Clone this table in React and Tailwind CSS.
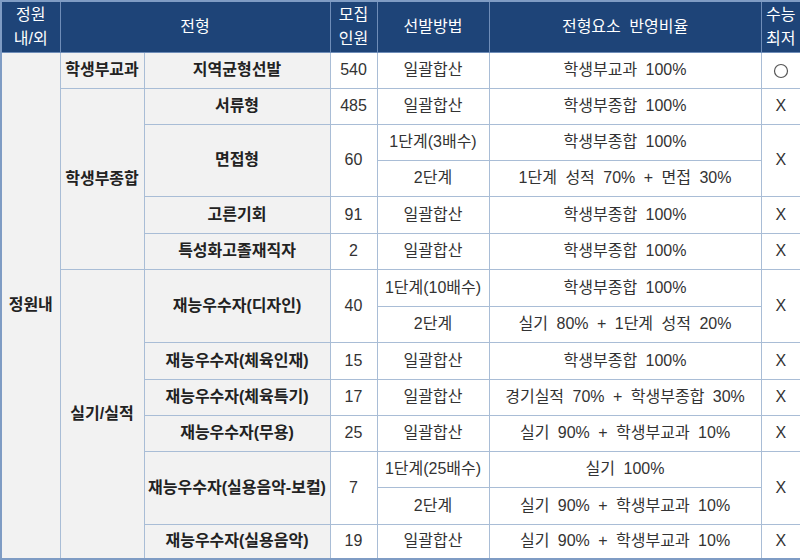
import React from 'react';

const font = { fontFamily: '"Liberation Sans", "Noto Sans CJK KR", sans-serif' };

const th = "border border-[#6f8db8] text-white font-normal text-[16px] leading-[24px] text-center align-middle";
const gray = "border border-[#a9bdd6] bg-[#f2f2f2] text-[#222] font-semibold text-[16px] text-center align-middle p-0 whitespace-nowrap";
const cell = "border border-[#a9bdd6] bg-white text-[#333] text-[16px] text-center align-middle p-0 whitespace-nowrap";
const ratio = cell + " [word-spacing:4px]";

function Circle() {
  return (
    <svg width="16" height="16" viewBox="0 0 16 16" className="inline-block align-middle">
      <circle cx="8" cy="8" r="6.5" fill="none" stroke="#555" strokeWidth="1.2" />
    </svg>
  );
}

export default function App() {
  return (
    <div className="w-[800px] h-[560px] bg-white overflow-hidden" style={font}>
      <table className="w-[800px] table-fixed border-collapse border-2 border-[#7f9cc4]">
        <colgroup>
          <col className="w-[59px]" />
          <col className="w-[84px]" />
          <col className="w-[186px]" />
          <col className="w-[47px]" />
          <col className="w-[112px]" />
          <col className="w-[272px]" />
          <col className="w-[40px]" />
        </colgroup>
        <thead className="bg-[#1e4478]">
          <tr className="h-[51px]">
            <th className={th}>정원<br />내/외</th>
            <th className={th} colSpan={2}>전형</th>
            <th className={th}>모집<br />인원</th>
            <th className={th}>선발방법</th>
            <th className={th + " [word-spacing:4px]"}>전형요소 반영비율</th>
            <th className={th}>수능<br />최저</th>
          </tr>
        </thead>
        <tbody>
          <tr className="h-[36px]">
            <td className={gray} rowSpan={14}>정원내</td>
            <td className={gray}>학생부교과</td>
            <td className={gray}>지역균형선발</td>
            <td className={cell}>540</td>
            <td className={cell}>일괄합산</td>
            <td className={ratio}>학생부교과 100%</td>
            <td className={cell}><Circle /></td>
          </tr>
          <tr className="h-[36px]">
            <td className={gray} rowSpan={5}>학생부종합</td>
            <td className={gray}>서류형</td>
            <td className={cell}>485</td>
            <td className={cell}>일괄합산</td>
            <td className={ratio}>학생부종합 100%</td>
            <td className={cell}>X</td>
          </tr>
          <tr className="h-[36px]">
            <td className={gray} rowSpan={2}>면접형</td>
            <td className={cell} rowSpan={2}>60</td>
            <td className={cell}>1단계(3배수)</td>
            <td className={ratio}>학생부종합 100%</td>
            <td className={cell} rowSpan={2}>X</td>
          </tr>
          <tr className="h-[36px]">
            <td className={cell}>2단계</td>
            <td className={ratio}>1단계 성적 70% + 면접 30%</td>
          </tr>
          <tr className="h-[37px]">
            <td className={gray}>고른기회</td>
            <td className={cell}>91</td>
            <td className={cell}>일괄합산</td>
            <td className={ratio}>학생부종합 100%</td>
            <td className={cell}>X</td>
          </tr>
          <tr className="h-[36px]">
            <td className={gray}>특성화고졸재직자</td>
            <td className={cell}>2</td>
            <td className={cell}>일괄합산</td>
            <td className={ratio}>학생부종합 100%</td>
            <td className={cell}>X</td>
          </tr>
          <tr className="h-[37px]">
            <td className={gray} rowSpan={8}>실기/실적</td>
            <td className={gray} rowSpan={2}>재능우수자(디자인)</td>
            <td className={cell} rowSpan={2}>40</td>
            <td className={cell}>1단계(10배수)</td>
            <td className={ratio}>학생부종합 100%</td>
            <td className={cell} rowSpan={2}>X</td>
          </tr>
          <tr className="h-[36px]">
            <td className={cell}>2단계</td>
            <td className={ratio}>실기 80% + 1단계 성적 20%</td>
          </tr>
          <tr className="h-[37px]">
            <td className={gray}>재능우수자(체육인재)</td>
            <td className={cell}>15</td>
            <td className={cell}>일괄합산</td>
            <td className={ratio}>학생부종합 100%</td>
            <td className={cell}>X</td>
          </tr>
          <tr className="h-[36px]">
            <td className={gray}>재능우수자(체육특기)</td>
            <td className={cell}>17</td>
            <td className={cell}>일괄합산</td>
            <td className={ratio}>경기실적 70% + 학생부종합 30%</td>
            <td className={cell}>X</td>
          </tr>
          <tr className="h-[36px]">
            <td className={gray}>재능우수자(무용)</td>
            <td className={cell}>25</td>
            <td className={cell}>일괄합산</td>
            <td className={ratio}>실기 90% + 학생부교과 10%</td>
            <td className={cell}>X</td>
          </tr>
          <tr className="h-[36px]">
            <td className={gray} rowSpan={2}>재능우수자(실용음악-보컬)</td>
            <td className={cell} rowSpan={2}>7</td>
            <td className={cell}>1단계(25배수)</td>
            <td className={ratio}>실기 100%</td>
            <td className={cell} rowSpan={2}>X</td>
          </tr>
          <tr className="h-[37px]">
            <td className={cell}>2단계</td>
            <td className={ratio}>실기 90% + 학생부교과 10%</td>
          </tr>
          <tr className="h-[35px]">
            <td className={gray}>재능우수자(실용음악)</td>
            <td className={cell}>19</td>
            <td className={cell}>일괄합산</td>
            <td className={ratio}>실기 90% + 학생부교과 10%</td>
            <td className={cell}>X</td>
          </tr>
        </tbody>
      </table>
    </div>
  );
}
